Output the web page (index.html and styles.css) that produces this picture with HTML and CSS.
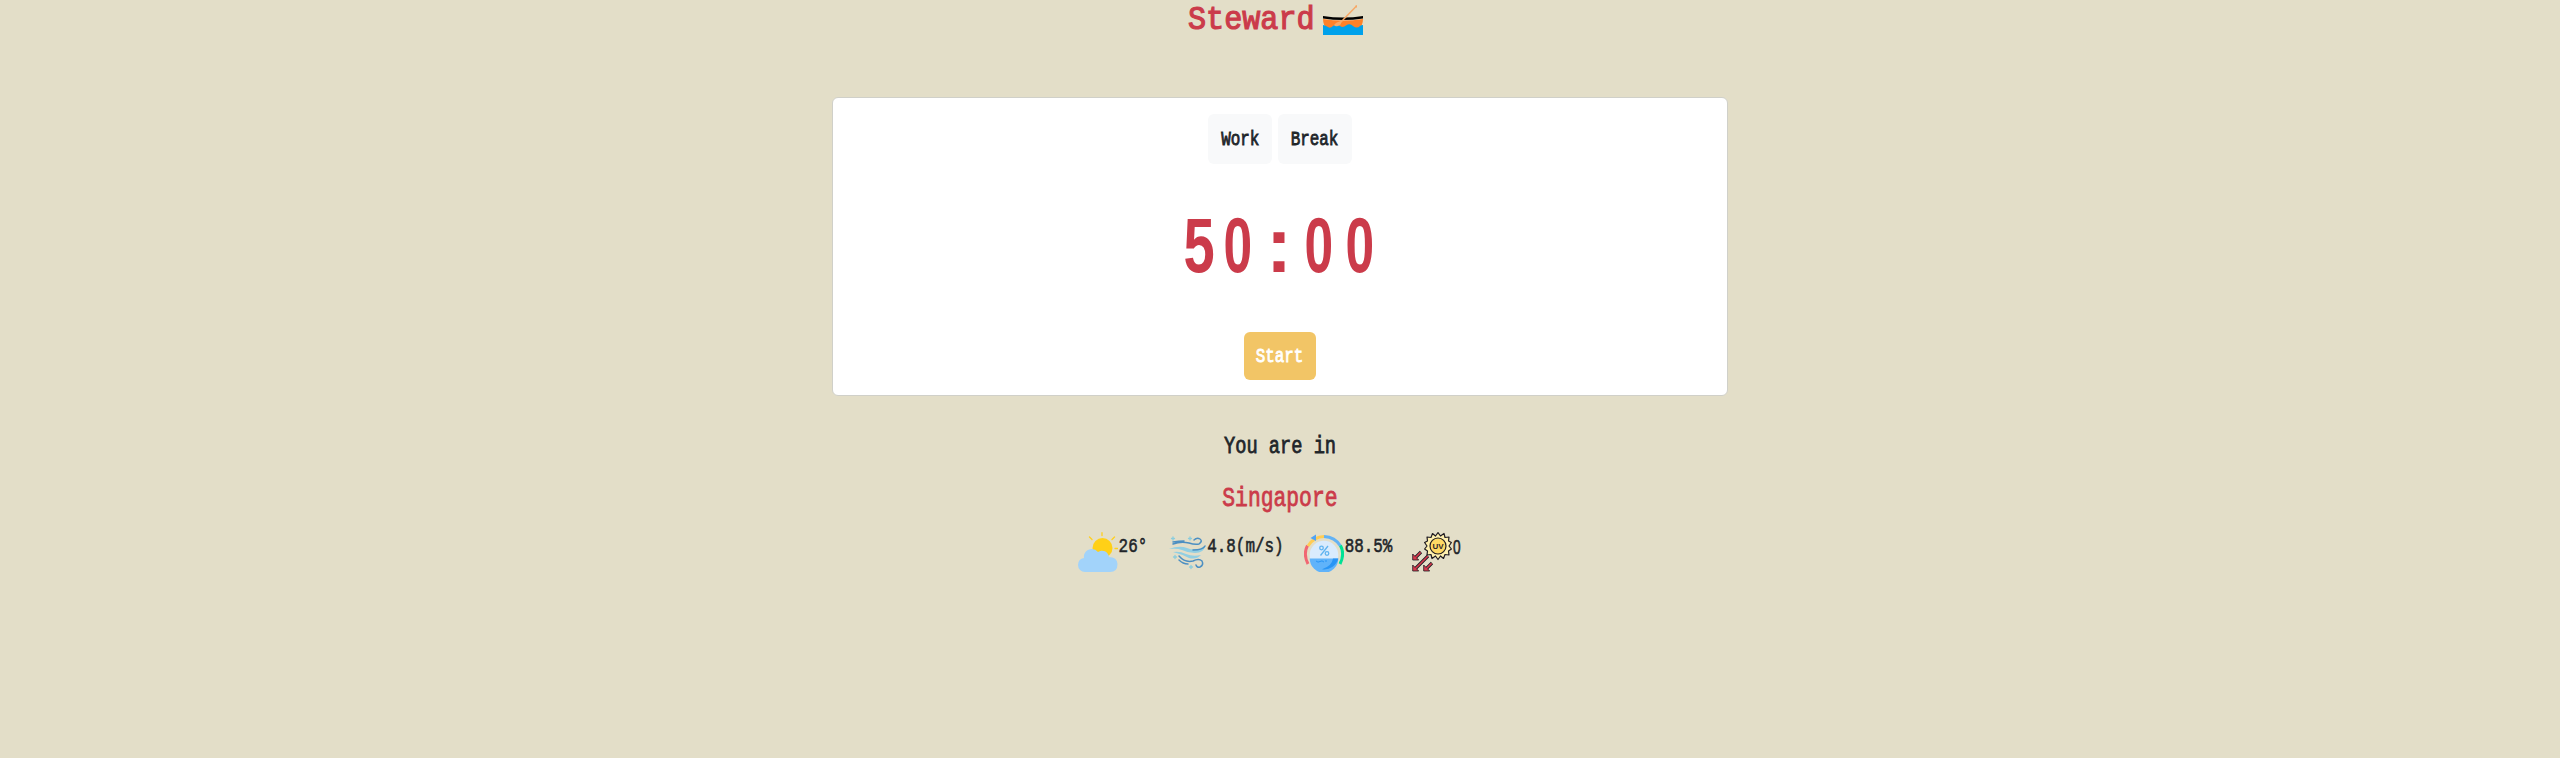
FILE: index.html
```html
<!DOCTYPE html>
<html lang="en">
<head>
<meta charset="utf-8">
<title>Steward</title>
<link rel="stylesheet" href="styles.css">
</head>
<body>
<header class="header">
  <h1 class="title"><span class="glyphs">Steward</span></h1>
  <svg class="boat" viewBox="0 0 40 30">
    <path fill="#ff8128" d="M0 14Q20 17 40 14Q40 21 35 25H5Q0 21 0 14Z"/>
    <path d="M0 11Q20 14 40 11V13.500Q20 16.500 0 13.500Z"/>
    <path fill="#00a1eb" d="M0 20Q2 20 4 21.500Q7 24 10 21Q13 18 17 21Q20 23 23 20.500Q27 18 30 21Q34 24 37 21Q38 20 40 20V30H0Z"/>
    <path fill="none" stroke="#f7a866" stroke-width="1.500" d="M33.500 1L17 18"/>
    <path fill="#f7a866" d="M18 16Q19 20 15 21Q12 22 11 20Q13 17 18 16ZM32 1L34 0L34 3Z"/>
  </svg>
</header>
<main class="card">
  <div class="modes">
    <button class="btn work"><span class="glyphs">Work</span></button>
    <button class="btn break"><span class="glyphs">Break</span></button>
  </div>
  <div class="timer"><span class="five">5</span><span>0</span><span class="colon">:</span><span>0</span><span>0</span></div>
  <button class="btn start"><span class="glyphs">Start</span></button>
</main>
<section class="location">
  <p class="lead"><span class="glyphs">You are in</span></p>
  <h2 class="city"><span class="glyphs">Singapore</span></h2>
  <div class="weather">
    <div class="item">
      <svg class="icon" viewBox="0 0 40 40">
        <path stroke="#ffcf1f" stroke-width="1.300" stroke-linecap="round" d="M24 .7V3.500M11.500 5L14 7.500M36.500 5L34 7.500M37 16.500H39.500"/>
        <circle cx="24.500" cy="16" r="10" fill="#ffd017"/>
        <path fill="#a2d3fa" d="M7 40A7 7 0 0 1 0 33Q0 27 6 26A8 8 0 0 1 6 23A8 8 0 0 1 20 20A7 7 0 0 1 31 25Q39 25 39.500 32Q39.500 40 32 40Z"/>
      </svg>
      <span class="value temp"><span class="glyphs">26°</span></span>
    </div>
    <div class="item">
      <svg class="icon" viewBox="0 0 40 40" fill="none" stroke-linecap="round">
        <path fill="#91cfe3" d="M2 17Q12 13 20 16Q29 20 38 14Q37 21 28 21Q21 21 15 18Q10 16 2 17ZM6 20Q13 19 19 22Q26 25 34 23Q29 28 22 26Q14 22 6 20Z"/>
        <path stroke="#4c8fc2" stroke-width="1.500" d="M6 10Q12 9 17 9M6 12Q14 9 22 11Q28 13 32 12Q36 9 33 7Q30 5 27 8M38 14Q36 18 26 18M12 24Q18 31 26 29Q32 26 35 29Q37 33 33 35Q30 36 29 33M12 28Q16 32 21 32"/>
        <path stroke="#8bcddd" stroke-width="1.300" d="M6 5V8M4.500 6.500H7.500M23 5V8M21.500 6.500H24.500M8 23.500V26.500M6.500 25H9.500M24 33.500V36.500M22.500 35H25.500"/>
      </svg>
      <span class="value wind"><span class="glyphs">4.8(m/s)</span></span>
    </div>
    <div class="item">
      <svg class="icon" viewBox="0 0 40 40" fill="none">
        <circle cx="20" cy="23" r="14.300" fill="#d9ebfd"/>
        <path fill="#60b3fa" d="M5.700 26.500H34.300A14.300 14.300 0 0 1 5.700 26.500Z"/>
        <path fill="#2995f5" d="M29 26.500H34.300A14.300 14.300 0 0 1 18 37.200Q28 34 29 26.500Z"/>
        <path stroke="#f16772" stroke-width="3" d="M4 32Q-1 22 3.500 13.500"/>
        <path stroke="#ffcd55" stroke-width="3" d="M4 14Q10 4.500 20 4.500"/>
        <path stroke="#62b2f5" stroke-width="3" d="M20 4.500Q31 5 36.500 14"/>
        <path stroke="#00e194" stroke-width="3" d="M36.500 13.500Q41 22 36 32"/>
        <path fill="#50a4f5" d="M6.500 6L12 2.500V9Z"/>
        <g stroke="#60b4f0" stroke-width="1.300"><path d="M24 14L16.500 23.500"/><circle cx="17.500" cy="16" r="1.800"/><circle cx="23" cy="21.500" r="1.800"/></g>
        <path stroke="#2995f5" d="M12 29Q14 31 16 29.500Q18 28 20 30M21 29H23"/>
      </svg>
      <span class="value humid"><span class="glyphs">88.5%</span></span>
    </div>
    <div class="item">
      <svg class="icon" viewBox="0 0 40 40" stroke-linejoin="round">
        <g fill="none" stroke="#201c22" stroke-width="3.200">
          <path d="M16 24L3 37M9 20L3 26M20 31L14 37"/>
        </g>
        <g fill="#d83a4e" stroke="#201c22" stroke-width=".8">
          <path d="M.700 33V39H6.700ZM.700 22V28H6.700ZM11.700 33V39H17.700Z"/>
        </g>
        <g fill="none" stroke="#d83a4e" stroke-width="1.600">
          <path d="M16 24L3 37M8.600 20.400L3 26M19.600 31.400L14 37"/>
        </g>
        <path fill="#fff0ae" stroke="#201c22" stroke-width="1.200" d="M26 .6L28.500 4L32 1.500L33 5.500L37 5L36.500 9L39.400 10.500L37 14L39.400 17L36.500 19L37 23L33 22.500L31.500 26.500L28.500 24L26 27.500L23.500 24L20 26.500L19 22.500L15 23L15.500 19L12.600 17L15 14L12.600 10.500L15.500 9L15 5L19 5.500L20.500 1.500L23.500 4Z"/>
        <circle cx="26" cy="14" r="8" fill="#ffd964" stroke="#201c22" stroke-width="1.200"/>
        <text class="uv" x="26" y="17">UV</text>
      </svg>
      <span class="value index"><span>0</span></span>
    </div>
  </div>
</section>
</body>
</html>
```
FILE: styles.css
```css
* { box-sizing: border-box; }

html { background: #e3dec8; }

body {
  margin: 0;
  color: #212529;
  font-family: "Liberation Mono", monospace;
  display: flex;
  flex-direction: column;
  align-items: center;
}

h1, h2, p { margin: 0; }

.glyphs {
  flex: none;
  white-space: pre;
  transform: scaleX(0.757);
}

.header {
  display: flex;
  gap: 8px;
  height: 97px;
  padding-right: 10px;
}

.title {
  display: flex;
  justify-content: center;
  width: 127px;
  height: 41px;
  line-height: 41px;
  font-size: 33px;
  font-weight: normal;
  color: #cb3b4a;
  -webkit-text-stroke: 1.2px #cb3b4a;
}
.title .glyphs { transform: scaleX(0.914); }

.boat {
  width: 40px;
  height: 30px;
  margin-top: 5px;
}

.card {
  display: flex;
  flex-direction: column;
  align-items: center;
  width: 896px;
  height: 299px;
  padding-top: 16px;
  background: #fff;
  border: 1px solid #d0d0c9;
  border-radius: 6px;
}

.modes { display: flex; gap: 6px; }

.btn {
  display: flex;
  justify-content: center;
  align-items: center;
  height: 50px;
  padding: 2px 0 0;
  border: 0;
  border-radius: 6px;
  background: #f8f9fa;
  color: #212529;
  font: 21px/24px "Liberation Mono", monospace;
  -webkit-text-stroke: 0.9px currentColor;
}
.work { width: 64px; }
.break { width: 74px; }
.start {
  width: 72px;
  height: 48px;
  background: #f2c566;
  color: #fff;
}

.timer {
  display: flex;
  width: 202px;
  height: 168px;
  color: #cb3b4a;
  font: bold 78px/162px "Liberation Sans", sans-serif;
}
.timer span {
  display: flex;
  justify-content: center;
  width: 40.4px;
  transform: translateX(-1.5px) scaleX(0.66);
}
.timer .five { transform: scaleX(0.72); }
.timer .colon { transform: translateX(-1px); }

.location {
  display: flex;
  flex-direction: column;
  align-items: center;
}

.lead, .city {
  display: flex;
  justify-content: center;
  font-weight: normal;
  -webkit-text-stroke: 0.8px currentColor;
}
.lead {
  margin-top: 35px;
  font-size: 23px;
  line-height: 32px;
}
.lead .glyphs { transform: scaleX(0.812); }

.city {
  margin-top: 18px;
  font-size: 27px;
  line-height: 36px;
  color: #cb3b4a;
}
.city .glyphs { transform: scaleX(0.79); }

.weather { display: flex; margin-top: 15px; }

.item {
  display: flex;
  height: 40px;
  margin-right: 20px;
}

.icon { width: 40px; height: 40px; }

.value {
  display: flex;
  justify-content: center;
  font-size: 21px;
  line-height: 30px;
  -webkit-text-stroke: 0.6px #212529;
}
.temp { width: 28.8px; }
.wind { width: 76.8px; }
.humid { width: 48px; }
.index {
  width: 9.6px;
  font-family: "Liberation Sans", sans-serif;
}
.index span { transform: scaleX(0.65); }

.uv {
  fill: #302529;
  font: bold 8px "Liberation Sans", sans-serif;
  text-anchor: middle;
}
```
